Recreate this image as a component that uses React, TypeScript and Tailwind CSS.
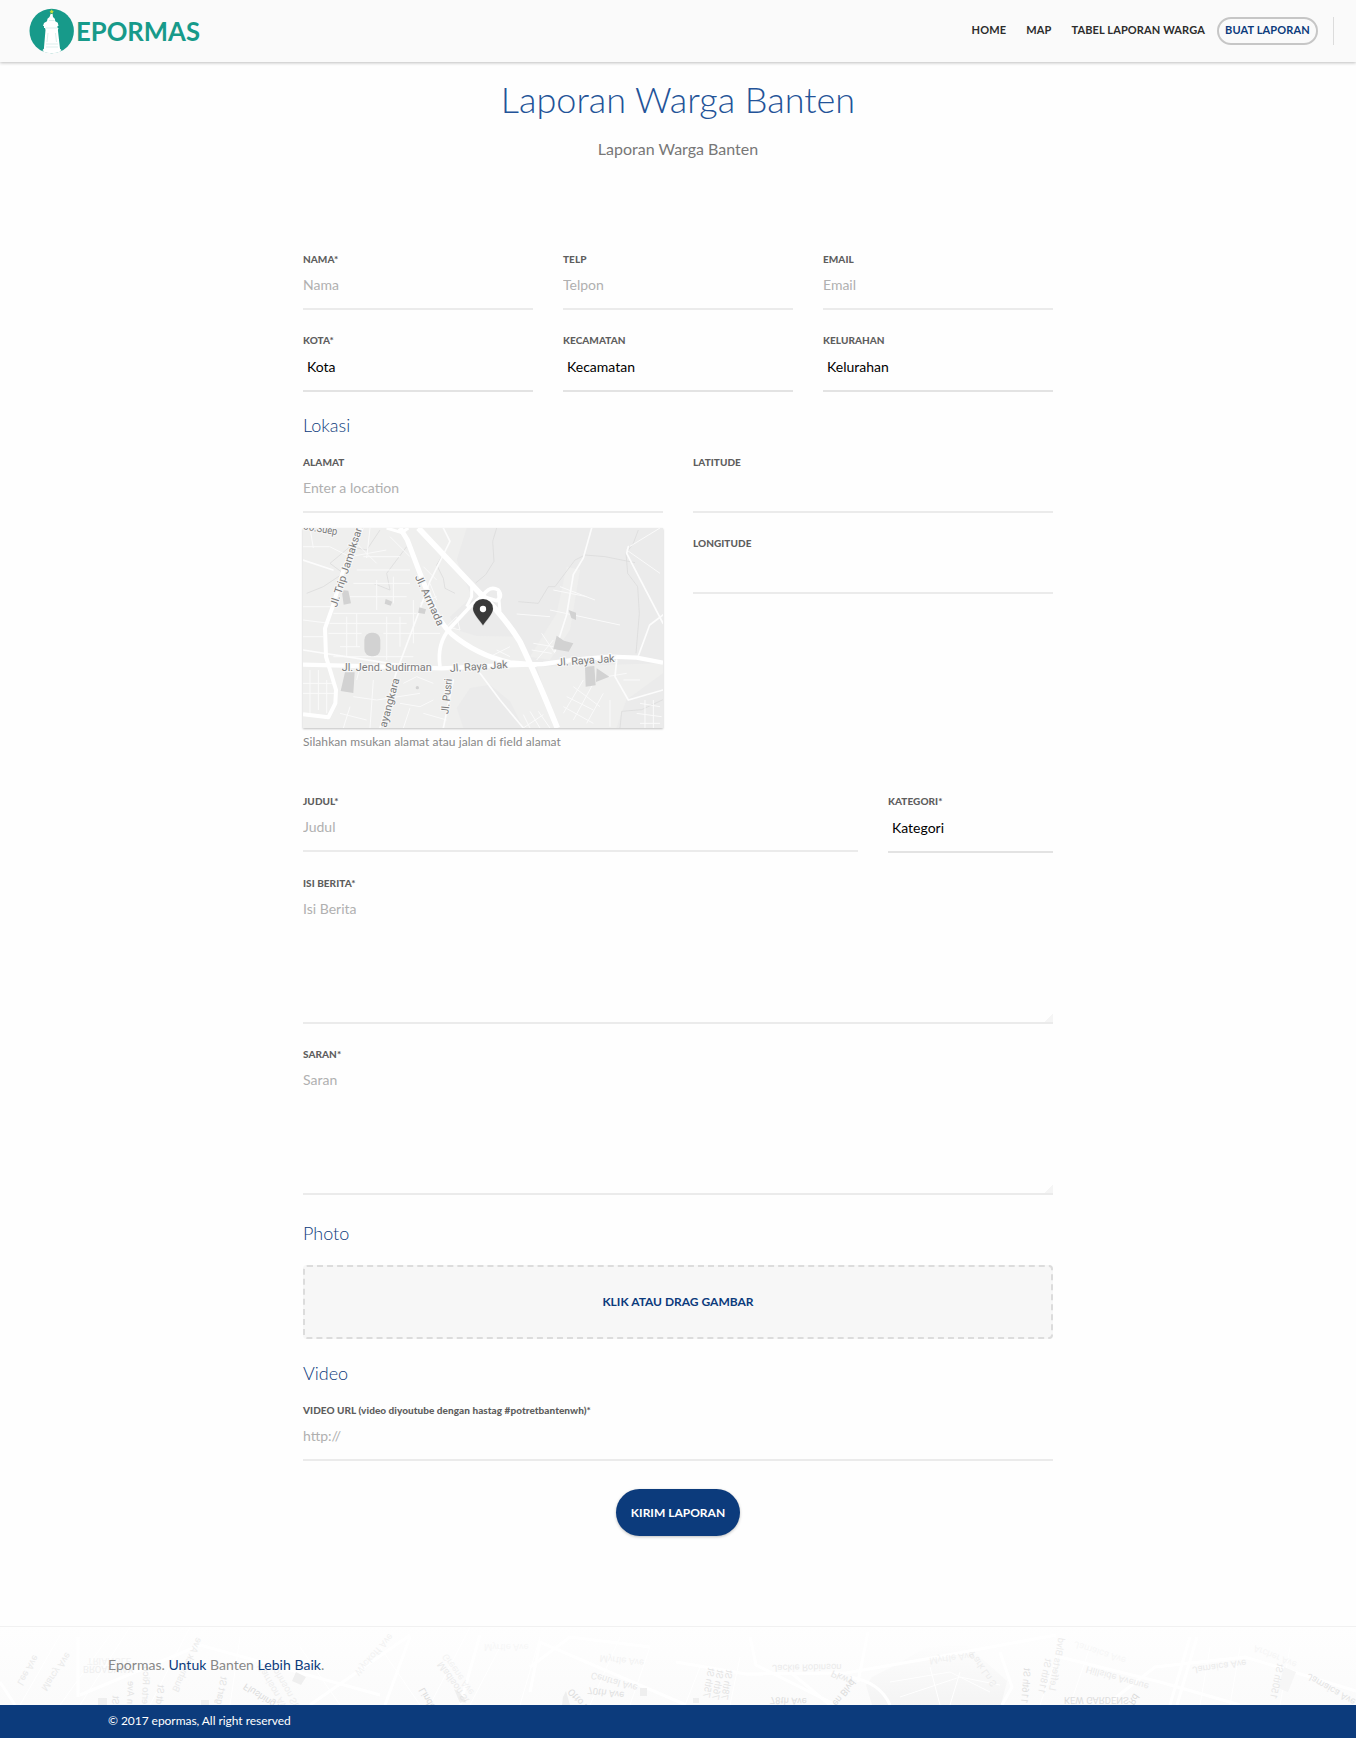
import React from "react";

const LABEL = "relative -top-px block h-4 text-[10px] leading-4 font-black tracking-[0.05px] text-[#5e5e5e] whitespace-nowrap";
const LINE = "block w-full border-b-2 border-[#ebebeb] bg-transparent outline-none text-[14px] text-black placeholder:text-[#b0b0b0]";

function Input({ label, placeholder = "", className = "" }: { label: string; placeholder?: string; className?: string }) {
  return (
    <label className={"block " + className}>
      <span className={LABEL}>{label}</span>
      <input type="text" placeholder={placeholder} className={LINE + " h-[42px] pb-[8px]"} />
    </label>
  );
}

function Select({ label, value, className = "" }: { label: string; value: string; className?: string }) {
  return (
    <label className={"block " + className}>
      <span className={LABEL}>{label}</span>
      <select className="block h-[43px] w-full appearance-none border-b-2 border-[#e3e3e3] bg-transparent pb-[6px] pl-1 text-[14px] text-black outline-none">
        <option>{value}</option>
      </select>
    </label>
  );
}

function Area({ label, placeholder }: { label: string; placeholder: string }) {
  return (
    <label className="relative block">
      <span className={LABEL}>{label}</span>
      <textarea placeholder={placeholder} className={LINE + " h-[132px] resize-none pt-[7px] leading-5"} />
      <span className="absolute right-0 bottom-[2px] h-2 w-2 bg-[linear-gradient(135deg,transparent_50%,#f5f5f5_50%)]" />
    </label>
  );
}

function Logo() {
  return (
    <svg width="180" height="50" viewBox="24 4 180 50" className="block">
      <defs>
        <clipPath id="disc"><circle cx="51.7" cy="31" r="22.2" /></clipPath>
      </defs>
      <circle cx="51.7" cy="31" r="22.2" fill="#179a8a" />
      <g clipPath="url(#disc)">
        <path d="M50.600 14h2l.4 3 1.800 1.800.5 2.500 2.500 1.500.7 3.200h-1v2h1l-.6 2 2.600 23H43.500l2-23-.5-2h-1v-2h-1l1-3 3-1.700.5-2.500 2-1.800z" fill="#fff" />
        <path d="M45.500 28h12M49 20.500h5.500M48 33l-1 9M55.500 33l1 9M46 44h12M46 47h12" stroke="#cfe8e5" strokeWidth=".7" fill="none" />
        <path d="M43 49h18l1 5H42z" fill="#fff" opacity=".8" />
      </g>
      <path d="M51.700 9.300l.7 1.500 1.600.2-1.200 1.100.3 1.600-1.400-.8-1.400.8.300-1.600-1.200-1.100 1.600-.2z" fill="#c8dc3c" />
      <text x="76" y="40.500" fontFamily="Lato, sans-serif" fontWeight="700" fontSize="26" textLength="124" lengthAdjust="spacingAndGlyphs" fill="#179a8a">EPORMAS</text>
    </svg>
  );
}

function StreetMap() {
  const label = { fontFamily: "Roboto, sans-serif", fill: "#7c7c7c", stroke: "#f7f7f7", strokeWidth: 6, paintOrder: "stroke" as const };
  return (
    <svg width="360" height="200" viewBox="39 84 1080 600" className="block">
      <rect x="39" y="84" width="1080" height="600" fill="#efefee" />
      <path d="M530 84H1119V684H800L730 500 690 410 560 408 500 390 480 350 545 290 500 180Z" fill="#ebebeb" />
      <path d="M520 684l-20-60 40-60 60-10 60 50 40 80z" fill="#ebebeb" />
      <path d="M830 200l40 10-30 180-60 90-60-10 80-130z" fill="#efefee" />
      <path d="M740 500l379-10v30l-110 80-30 84H800z" fill="#efefee" />
      <g stroke="#dcdcdc" strokeWidth="2.500" fill="none" strokeLinejoin="round">
        <path d="M620 84l-12 40 4 60-25 40-30 25" />
        <path d="M685 305l60 5 30-50 20 0 60-80 30-15 60 5 90 18" />
        <path d="M1045 90l-15 40-22 30 5 60 30 40 5 80-10 120" />
        <path d="M470 145l-30 50 20 40 5 30 30 15" />
        <path d="M270 90l-40 60-50-10-60 50 40 30-60 40-50 20" />
        <path d="M350 140l-60 80 10 50-50-20M990 684l5-50 60-5 64-30" />
      </g>
      <g stroke="#fafafa" strokeWidth="3" fill="none">
        <path d="M39 140h80l60 30 110-20M60 84l10 60M240 84l-10 90M39 320h90M39 360l80 10M39 410h60M39 550h95M39 580h95M60 510v130M85 510v120M110 540v100M130 340h250M120 370h230M115 400h100M280 400h170M170 350v120M200 340v100M290 350v130M330 350v90M370 300v130M260 240v90M310 230v80M190 250h170M180 290h170M200 210h160M220 170h110M300 110l60 60M400 200l40 40M420 250l20 50M390 310l50-20M200 130l60 60" />
        <path d="M150 440h60M130 470h240M250 540l-10 144M190 590l70 10 130-20M330 610l60 10 40-20M340 550l40-20 50 20M210 500l-10 40M150 640l80 20M180 620l-20 64M340 684l20-60M400 640l70 20" />
        <path d="M680 342l100 8M780 330l210 45M790 270l100 20M810 260l105 40M730 430l60 10M725 450l60 10M740 480l50-60M755 400l40 60M1010 150l100 70M1110 84l-90 55" />
        <path d="M830 590l80 40M850 560l80 60M880 540l-60 100M910 550l-60 110M940 580l-50 90M820 620l90 50M960 600v80M1050 610l60 10M1040 640l75 10M1050 670h60M1065 600v84M1090 600v84M700 684l60-40M720 684l-20-40M750 684l-30-50M780 684l-35-50M1000 540h50M950 530l60-10" />
        <path d="M500 350l-30 30 40 10zM620 450l40 20M600 470l60-30" />
      </g>
      <g stroke="#fcfcfc" strokeWidth="5" fill="none" strokeLinecap="round">
        <path d="M905 84l-25 90-30 50-20 120-35 110" />
        <path d="M1015 140l-5 20 109 210M1119 345l-40 30-35 95" />
        <path d="M460 84l20 40-60 120-40 110-60 160-50 170" />
        <path d="M39 450l260 40 160 15M39 180l90 30" />
        <path d="M570 520l60 80 70 84M490 540l-30 144M980 480l-5 50 40 70 104-30" />
      </g>
      <g stroke="#fff" fill="none" strokeLinejoin="round">
        <path d="M215 84L160 210 128 320 105 385 108 470 138 570 136 610 115 652 39 643" strokeWidth="12" />
        <path d="M39 494L280 500 455 505 600 498 760 492 860 478 960 470 1040 473 1119 488" strokeWidth="13" />
        <path d="M330 84L352 120 390 220 430 320Q450 370 485 402 560 465 660 488L740 494" strokeWidth="15" />
        <path d="M385 84L480 185 570 280Q640 345 690 425 740 530 802 684" strokeWidth="17" />
        <path d="M450 500Q440 430 480 385L540 320 580 285Q600 255 625 270 640 290 620 302L585 292" strokeWidth="11" />
        <path d="M290 84l45 14 20-14M545 255v35L530 320M625 275l5 60" strokeWidth="9" />
      </g>
      <g fill="#d2d2d2">
        <rect x="223" y="398" width="48" height="71" rx="22" />
        <path d="M165 517h29l-4 62-38-6zM155 270l20 2 8 38-22 4zM287 297l20 8-5 12-18-6zM388 322l20 6-4 14-20-4zM800 407l22 15 28 8-14 25-46-8zM836 330l22 8v22l-14-6zM885 500l28-2 4 58-30 4zM920 505l38 25-40 16z" />
        <circle cx="382" cy="563" r="5" />
      </g>
      <g {...label} fontSize="32" lengthAdjust="spacingAndGlyphs">
        <text transform="translate(40 88) rotate(10)" textLength="102" lengthAdjust="spacingAndGlyphs">Jo.Suep</text>
        <text transform="translate(140 323) rotate(-72)" textLength="256" lengthAdjust="spacingAndGlyphs">Jl. Trip Jamaksari</text>
        <text transform="translate(374 230) rotate(65)" textLength="165" lengthAdjust="spacingAndGlyphs">Jl. Armada</text>
        <text transform="translate(155 513)" textLength="270" lengthAdjust="spacingAndGlyphs">Jl. Jend. Sudirman</text>
        <text transform="translate(480 516) rotate(-4)" textLength="174" lengthAdjust="spacingAndGlyphs">Jl. Raya Jak</text>
        <text transform="translate(802 498) rotate(-4)" textLength="173" lengthAdjust="spacingAndGlyphs">Jl. Raya Jak</text>
        <text transform="translate(475 643) rotate(-84)" textLength="106" lengthAdjust="spacingAndGlyphs">Jl. Pusri</text>
        <text transform="translate(289 684) rotate(-75)" textLength="152" lengthAdjust="spacingAndGlyphs">ayangkara</text>
      </g>
      <path d="M579 379c-8-14-31-36-31-53a31 30 0 0162 0c0 17-23 39-31 53z" fill="#000" opacity=".12" />
      <path d="M579 376c-8-14-30-35-30-50a30 29 0 0160 0c0 15-22 36-30 50z" fill="#3a3a3a" />
      <circle cx="579" cy="327" r="9.500" fill="#fff" />
    </svg>
  );
}

type Street = [string, number, number, number, number];

// name, x, y, rotation, opacity
const STREETS: Street[] = [
  ["Lee Ave", 17, 56, -60, 0.5], ["Marcy Ave", 41, 61, -55, 0.5], ["TRIANGLE", 87, 31, 0, 0.3], ["BROADWAY", 83, 39, 0, 0.4],
  ["Bushwick Ave", 172, 63, -65, 0.5], ["erto Rico", 142, 77, -88, 0.6], ["n Ave", 127, 77, -88, 0.7], ["St", 112, 77, -85, 0.7],
  ["dt St", 156, 77, -85, 0.7], ["gart St", 216, 77, -80, 0.7], ["Flushing Av", 246, 56, 33, 0.9], ["Harrison Ave", 262, 36, 60, 0.4],
  ["Johnson St", 275, 36, 60, 0.4], ["Myrtle Ave", 484, 17, 0, 0.18], ["Wyckoff Ave", 354, 45, -48, 0.3], ["Linden", 424, 60, 60, 0.9],
  ["Madison St", 442, 34, 55, 0.5], ["Greene Ave", 447, 26, 55, 0.3], ["Myrtle Ave", 600, 28, 6, 0.3], ["Central Ave", 592, 45, 16, 0.6],
  ["70th Ave", 588, 60, 8, 0.8], ["Otto Rd", 572, 61, 48, 0.9], ["75th St", 703, 70, -80, 0.7], ["76th St", 712, 72, -80, 0.7],
  ["78th St", 721, 72, -80, 0.7], ["78th Ave", 770, 70, 2, 0.9], ["en Blvd", 832, 76, -52, 0.9], ["Jackie Robinson", 772, 38, -1, 0.5],
  ["Pkwy", 833, 43, 25, 0.6], ["Myrtle Ave", 929, 31, -8, 0.3], ["Park Ln S", 974, 24, 55, 0.4], ["116th St", 1021, 76, -85, 0.8],
  ["118th St", 1038, 66, -78, 0.6], ["Lefferts Blvd", 1049, 63, -80, 0.5], ["KEW GARDENS", 1064, 70, 0, 0.9], ["Rd", 1128, 75, -55, 1],
  ["Hillside Avenue", 1087, 39, 16, 0.5], ["Jamaica Ave", 1075, 14, 18, 0.18], ["Jamaica Ave", 1192, 40, -8, 0.5], ["Archer Ave", 1255, 18, 22, 0.2],
  ["150th St", 1270, 71, -78, 0.6], ["Jamaica Ave", 1309, 46, 30, 0.7],
];

function FooterMap() {
  return (
    <svg width="1356" height="78" viewBox="0 0 1356 78" className="absolute inset-0 h-full w-full" aria-hidden="true">
      <defs>
        <linearGradient id="fade" x1="0" y1="0" x2="0" y2="1">
          <stop offset="0" stopColor="#fefefe" />
          <stop offset="1" stopColor="#fbfbfb" />
        </linearGradient>
        <linearGradient id="park" x1="0" y1="0" x2="0" y2="1">
          <stop offset="0" stopColor="#fdfdfd" />
          <stop offset="1" stopColor="#f4f4f4" />
        </linearGradient>
      </defs>
      <rect width="1356" height="78" fill="url(#fade)" />
      <path d="M872 78l-6-20 6-8 20-10 35-20 40-2 40 36-6 24z" fill="url(#park)" />
      <g stroke="#fff" strokeWidth="1" fill="none">
        <path d="M20 78l40-70M60 78l50-70M130 0l-50 78M190 0l-40 78M240 10l-10 68M300 20l40 58M380 20l40 58M470 0l-40 78M500 20l-30 58M540 10l-20 68M620 10l-30 68M650 20l-20 58M700 40l-15 38M740 30l-10 48M890 55l60-10 40 20M900 70l60-20 40 8M930 40l10 38M960 45l-10 33M1060 20l-20 58M1090 20l-20 58M1210 20l-10 58M1240 20l-10 58M1290 20l-10 58" />
      </g>
      <g stroke="#fff" strokeWidth="3" fill="none">
        <path d="M0 55l15 23M80 68l120-50 180 50M78 10v60M310 78l100-70M410 10l-25 68M460 78l20-70M530 65l10-50 146 63M530 40l40-30 80 10" />
        <path d="M676 35l70 12 100-1 80-14 130-24M750 10l6 28 80 40M868 5l-10 50M790 45l40 33M850 50q30 5 40 28M1000 25l12 35-10 18M1060 30l100 25 80 23M1110 75l45-35 90-10 111 34M1190 10l-20 68M1197 10l-20 68" />
      </g>
      <path d="M98 71h9v7h-9zM201 73h8v5h-8zM640 61h7v8h-7zM454 62l6 4 6 8-6 2zM563 70l3-6 4 14h-8zM693 71h6v5h-6zM296 45l10 5-5 8-9-4z" fill="#efefef" />
      <path d="M1284 40l12 5-8 20-10-4z" fill="#f6f6f6" />
      <g fontFamily="Roboto, sans-serif" fontSize="9.500" fill="#dadada">
        {STREETS.map(([name, x, y, angle, opacity], i) => (
          <text key={i} opacity={opacity} transform={`translate(${x} ${y}) rotate(${angle}) scale(1 -1)`}>{name}</text>
        ))}
      </g>
    </svg>
  );
}

const HEADING = "relative -top-px text-[18px] leading-5 font-light text-[#0c3b7c]";

export default function App() {
  return (
    <div className="flex h-[1738px] w-[1356px] flex-col bg-[#fefefe] font-['Lato',sans-serif] text-[#777]">
      <header className="relative flex h-[62px] shrink-0 items-start justify-between bg-[#fafafa] pl-6 shadow-[0_1px_3px_rgba(0,0,0,0.25)]">
        <a className="mt-1"><Logo /></a>
        <nav className="mt-[17px] flex h-7 items-center text-[11px] font-bold tracking-[0.13px] text-[#2c2c2c]">
          <a className="mr-5 pb-[2px]">HOME</a>
          <a className="mr-5 pb-[2px]">MAP</a>
          <a className="mr-3 pb-[2px]">TABEL LAPORAN WARGA</a>
          <a className="flex h-7 w-[101px] items-center justify-center rounded-full border-2 border-[#c6c6c6] pb-px text-[#0c3b7c]">BUAT LAPORAN</a>
          <span className="mr-[22px] ml-[15px] h-7 w-px bg-[#dcdcdc]" />
        </nav>
      </header>

      <section className="flex h-[190px] shrink-0 flex-col items-center">
        <h1 className="mt-[17px] text-[36px] leading-10 font-light text-[#235398]">Laporan Warga Banten</h1>
        <p className="mt-5 text-[16px] leading-5">Laporan Warga Banten</p>
      </section>

      <form className="mx-auto w-[750px] shrink-0">
        <div className="grid grid-cols-3 gap-x-[30px] gap-y-[23px]">
          <Input label="NAMA*" placeholder="Nama" />
          <Input label="TELP" placeholder="Telpon" />
          <Input label="EMAIL" placeholder="Email" />
          <Select label="KOTA*" value="Kota" />
          <Select label="KECAMATAN" value="Kecamatan" />
          <Select label="KELURAHAN" value="Kelurahan" />
        </div>

        <h2 className={HEADING + " mt-6"}>Lokasi</h2>
        <div className="mt-[19px] grid h-[339px] grid-cols-2 gap-x-[30px]">
          <div>
            <Input label="ALAMAT" placeholder="Enter a location" />
            <div className="mt-[15px] shadow-[0_1px_2px_rgba(0,0,0,0.25)]"><StreetMap /></div>
            <p className="mt-[6px] text-[12px] leading-4 tracking-[0.06px] text-[#888]">Silahkan msukan alamat atau jalan di field alamat</p>
          </div>
          <div>
            <Input label="LATITUDE" />
            <Input label="LONGITUDE" className="mt-[23px]" />
          </div>
        </div>

        <div className="flex gap-[30px]">
          <Input label="JUDUL*" placeholder="Judul" className="w-[555px]" />
          <Select label="KATEGORI*" value="Kategori" className="w-[165px]" />
        </div>
        <div className="mt-[23px] flex flex-col gap-[23px]">
          <Area label="ISI BERITA*" placeholder="Isi Berita" />
          <Area label="SARAN*" placeholder="Saran" />
        </div>

        <h2 className={HEADING + " mt-[29px]"}>Photo</h2>
        <div className="mt-[21px] flex h-[74px] items-center justify-center rounded-[4px] border-2 border-dashed border-[#dcdcdc] bg-[#f7f7f7] text-[12px] font-bold text-[#0c3b7c]">
          KLIK ATAU DRAG GAMBAR
        </div>

        <h2 className={HEADING + " mt-[25px]"}>Video</h2>
        <Input label="VIDEO URL (video diyoutube dengan hastag #potretbantenwh)*" placeholder="http://" className="mt-[19px]" />
        <button type="button" className="mx-auto mt-7 block h-[47px] w-[124px] rounded-full bg-[#0c3b7c] text-[12px] font-bold text-white shadow-[0_1px_3px_rgba(0,0,0,0.25)]">
          KIRIM LAPORAN
        </button>
      </form>

      <footer className="mt-auto shrink-0">
        <div className="relative h-[79px] border-t border-[#f1f1f1]">
          <FooterMap />
          <p className="relative pt-[28px] pl-[108px] text-[14px] leading-5 tracking-[0.03px] text-[#888]">
            Epormas. <span className="text-[#0c3b7c]">Untuk</span> Banten <span className="text-[#0c3b7c]">Lebih Baik</span>.
          </p>
        </div>
        <div className="flex h-[33px] items-center bg-[#0c3b7c] pb-[2px] pl-[108px] text-[12px] tracking-[-0.05px] text-white">© 2017 epormas, All right reserved</div>
      </footer>
    </div>
  );
}
